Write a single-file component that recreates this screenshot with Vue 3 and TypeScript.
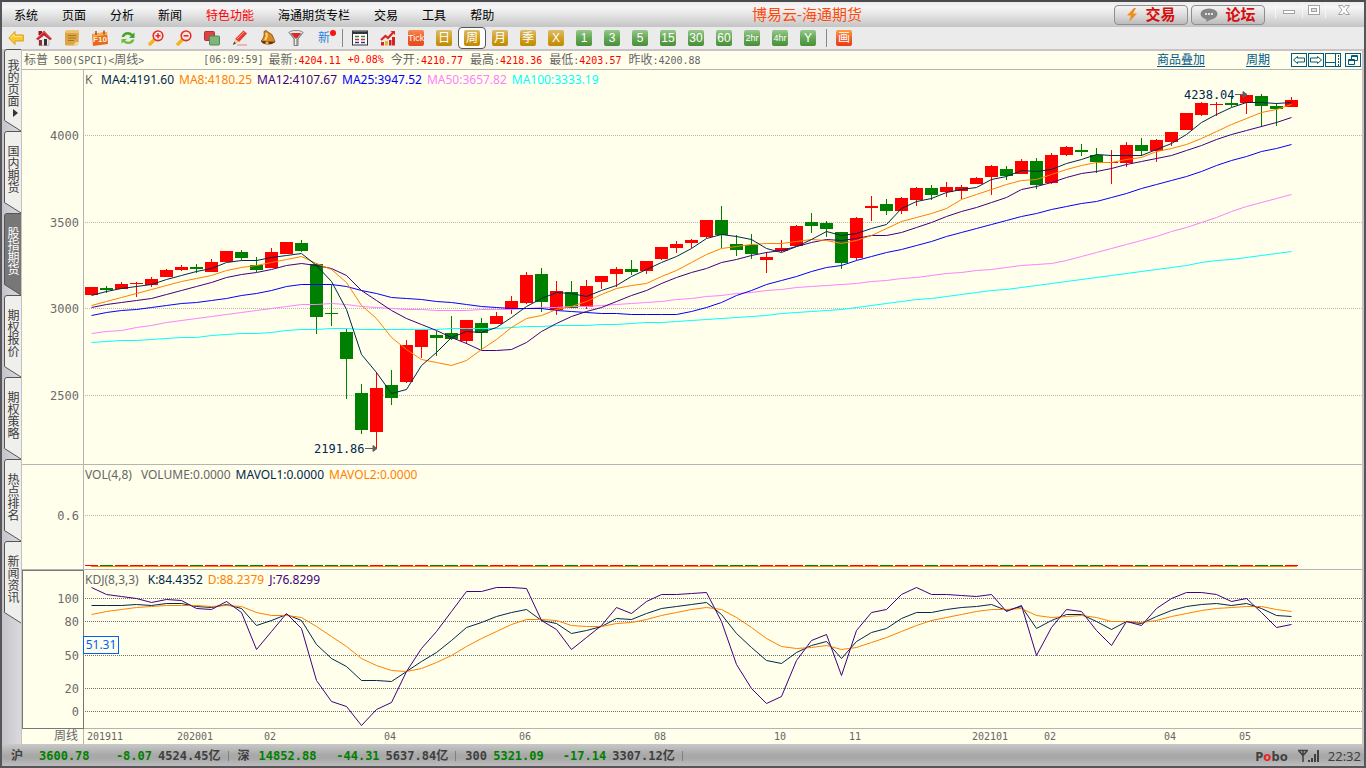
<script setup lang="ts">
type Candle = [dir: 'u' | 'd', top: number, bottom: number, high: number, low: number]
interface Tile { label: string; tone: string; small?: boolean; active?: boolean }

const STEP = 15
const FIRST_X = 7
const PRICE_TOP = 70
const KDJ_TOP = 570

const menu = ['系统', '页面', '分析', '新闻', '特色功能', '海通期货专栏', '交易', '工具', '帮助']
const tiles: Tile[] = [
  { label: 'Tick', tone: 'orange', small: true },
  { label: '日', tone: 'gold' },
  { label: '周', tone: 'gold', active: true },
  { label: '月', tone: 'gold' },
  { label: '季', tone: 'gold' },
  { label: 'X', tone: 'gold' },
  { label: '1', tone: 'green' },
  { label: '3', tone: 'green' },
  { label: '5', tone: 'green' },
  { label: '15', tone: 'green' },
  { label: '30', tone: 'green' },
  { label: '60', tone: 'green' },
  { label: '2hr', tone: 'green', small: true },
  { label: '4hr', tone: 'green', small: true },
  { label: 'Y', tone: 'green' },
]
const tabs = ['我的页面', '国内期货', '股指期货', '期权报价', '期权策略', '热点排名', '新闻资讯']
const activeTab = '股指期货'

const quotes = [
  { label: '今开', value: '4210.77', tone: 'up' },
  { label: '最高', value: '4218.36', tone: 'up' },
  { label: '最低', value: '4203.57', tone: 'up' },
  { label: '昨收', value: '4200.88', tone: 'flat' },
]

const maLegend = [
  { text: 'MA4:4191.60', tone: 'navy' },
  { text: 'MA8:4180.25', tone: 'amber' },
  { text: 'MA12:4107.67', tone: 'indigo' },
  { text: 'MA25:3947.52', tone: 'blue' },
  { text: 'MA50:3657.82', tone: 'pink' },
  { text: 'MA100:3333.19', tone: 'cyan' },
]
const volLegend = [
  { text: 'VOLUME:0.0000', tone: 'grey' },
  { text: 'MAVOL1:0.0000', tone: 'navy' },
  { text: 'MAVOL2:0.0000', tone: 'amber' },
]
const kdjLegend = [
  { text: 'K:84.4352', tone: 'navy' },
  { text: 'D:88.2379', tone: 'amber' },
  { text: 'J:76.8299', tone: 'indigo' },
]

const priceTicks = [
  { label: '4000', y: 65 },
  { label: '3500', y: 152 },
  { label: '3000', y: 238 },
  { label: '2500', y: 325 },
]
const kdjTicks = [
  { label: '100', y: 28 },
  { label: '80', y: 51 },
  { label: '50', y: 85 },
  { label: '20', y: 118 },
  { label: '0', y: 141 },
]
const dates = [
  { label: '201911', x: 3 },
  { label: '202001', x: 93 },
  { label: '02', x: 180 },
  { label: '04', x: 300 },
  { label: '06', x: 435 },
  { label: '08', x: 570 },
  { label: '10', x: 690 },
  { label: '11', x: 765 },
  { label: '202101', x: 888 },
  { label: '02', x: 960 },
  { label: '04', x: 1080 },
  { label: '05', x: 1155 },
]
const indices = [
  { name: '沪', last: '3600.78', change: '-8.07', amount: '4524.45' },
  { name: '深', last: '14852.88', change: '-44.31', amount: '5637.84' },
  { name: '300', last: '5321.09', change: '-17.14', amount: '3307.12' },
]

const candles: Candle[] = [
  ['u', 287, 295, 287, 295], ['d', 288, 290, 286, 293], ['u', 284, 289, 282, 289], ['u', 283, 284, 282, 297],
  ['u', 279, 285, 277, 287], ['u', 270, 277, 269, 277], ['u', 267, 270, 265, 271], ['d', 267, 269, 264, 273],
  ['u', 262, 272, 259, 272], ['u', 251, 262, 251, 262], ['d', 252, 258, 250, 260], ['d', 265, 270, 257, 272],
  ['u', 252, 268, 248, 268], ['u', 242, 254, 242, 254], ['d', 243, 251, 240, 252], ['d', 264, 317, 263, 334],
  ['d', 313, 314, 285, 326], ['d', 332, 359, 329, 399], ['d', 393, 430, 384, 434], ['u', 388, 432, 372, 449],
  ['d', 385, 398, 370, 405], ['u', 345, 382, 340, 383], ['u', 330, 347, 330, 358], ['d', 335, 338, 331, 356],
  ['d', 333, 339, 316, 340], ['u', 320, 341, 320, 344], ['d', 323, 333, 318, 350], ['u', 316, 324, 312, 324],
  ['u', 301, 309, 296, 314], ['u', 275, 303, 272, 304], ['d', 274, 302, 268, 312], ['u', 291, 310, 281, 315],
  ['d', 292, 308, 281, 308], ['u', 286, 307, 280, 309], ['u', 276, 282, 276, 289], ['u', 269, 274, 267, 287],
  ['d', 269, 272, 260, 275], ['u', 261, 271, 261, 274], ['u', 247, 259, 247, 260], ['u', 244, 248, 241, 253],
  ['u', 240, 243, 239, 248], ['u', 220, 237, 220, 238], ['d', 220, 235, 206, 248], ['d', 244, 250, 235, 256],
  ['d', 245, 254, 234, 259], ['u', 257, 260, 252, 273], ['u', 248, 251, 240, 252], ['u', 226, 246, 225, 247],
  ['d', 222, 226, 213, 233], ['d', 223, 229, 221, 237], ['d', 232, 263, 232, 269], ['u', 218, 258, 217, 260],
  ['u', 206, 208, 196, 221], ['d', 204, 211, 199, 215], ['u', 198, 211, 197, 214], ['u', 188, 200, 187, 206],
  ['d', 188, 195, 185, 200], ['u', 187, 192, 182, 197], ['u', 187, 191, 185, 199], ['u', 178, 184, 177, 184],
  ['u', 166, 177, 165, 195], ['d', 169, 176, 166, 180], ['u', 161, 174, 159, 174], ['d', 161, 185, 158, 189],
  ['u', 155, 183, 153, 184], ['u', 147, 155, 146, 156], ['d', 150, 152, 144, 156], ['d', 155, 162, 148, 173],
  ['u', 162, 163, 150, 184], ['u', 145, 163, 142, 167], ['d', 145, 151, 138, 156], ['u', 140, 151, 139, 162],
  ['u', 132, 142, 132, 146], ['u', 113, 130, 113, 130], ['u', 103, 115, 102, 116], ['u', 104, 105, 102, 116],
  ['d', 103, 105, 97, 107], ['u', 95, 103, 94, 114], ['d', 96, 106, 94, 127], ['d', 106, 109, 103, 126],
  ['u', 100, 107, 97, 107],
]

const averages = [
  {
    tone: 'cyan',
    values: [342, 341, 340, 340, 339, 338, 337, 337, 335, 334, 333, 333, 332, 330, 329, 329, 328, 328, 329, 329, 329, 329, 329, 329, 328, 328, 328, 328, 327, 326, 326, 325, 325, 325, 324, 324, 323, 322, 322, 321, 320, 319, 318, 317, 316, 315, 313, 312, 311, 310, 309, 307, 305, 303, 301, 299, 298, 296, 294, 292, 290, 289, 287, 285, 283, 281, 279, 277, 275, 273, 271, 269, 267, 265, 262, 260, 259, 257, 255, 253, 251],
  },
  {
    tone: 'pink',
    values: [333, 331, 330, 327, 325, 322, 320, 318, 316, 314, 312, 310, 308, 306, 304, 304, 303, 304, 306, 307, 308, 309, 309, 310, 310, 310, 309, 309, 309, 308, 307, 307, 306, 306, 305, 304, 303, 302, 301, 299, 298, 296, 295, 293, 292, 290, 289, 287, 286, 285, 284, 283, 281, 280, 278, 277, 275, 273, 272, 270, 269, 267, 265, 264, 263, 260, 256, 252, 248, 244, 240, 236, 231, 227, 222, 217, 211, 206, 202, 198, 194],
  },
  {
    tone: 'blue',
    values: [315, 312, 310, 309, 307, 305, 303, 302, 300, 298, 295, 293, 290, 286, 284, 284, 284, 286, 290, 293, 297, 298, 299, 301, 302, 304, 306, 307, 308, 308, 308, 310, 311, 312, 313, 313, 314, 314, 314, 314, 311, 307, 302, 295, 290, 284, 280, 276, 271, 267, 265, 260, 256, 252, 249, 245, 241, 236, 232, 228, 224, 220, 216, 213, 209, 206, 203, 201, 197, 193, 188, 184, 180, 176, 171, 165, 160, 156, 151, 148, 144],
  },
  {
    tone: 'indigo',
    values: [307, 304, 302, 300, 298, 294, 290, 286, 282, 277, 274, 272, 269, 265, 263, 265, 268, 275, 290, 300, 310, 318, 324, 330, 337, 343, 350, 350, 349, 342, 331, 323, 316, 311, 307, 301, 295, 290, 283, 277, 272, 268, 262, 259, 255, 252, 250, 246, 242, 239, 240, 238, 235, 235, 232, 227, 222, 216, 211, 207, 202, 197, 189, 186, 182, 177, 173, 171, 168, 164, 161, 158, 155, 150, 145, 139, 134, 130, 126, 122, 117],
  },
  {
    tone: 'amber',
    values: [305, 301, 297, 293, 289, 285, 281, 278, 275, 270, 267, 265, 262, 259, 256, 263, 269, 282, 305, 318, 337, 349, 359, 362, 365, 360, 349, 339, 327, 318, 315, 309, 306, 301, 294, 288, 285, 283, 276, 270, 262, 254, 248, 246, 244, 243, 243, 241, 239, 240, 243, 240, 235, 228, 221, 217, 213, 208, 199, 194, 189, 184, 180, 179, 174, 169, 165, 162, 162, 159, 157, 151, 148, 144, 138, 131, 124, 118, 112, 109, 104],
  },
  {
    tone: 'navy',
    values: [295, 291, 288, 286, 284, 279, 275, 271, 268, 262, 260, 260, 257, 255, 253, 265, 281, 309, 354, 372, 393, 389, 365, 352, 337, 331, 332, 327, 317, 306, 298, 292, 293, 296, 290, 285, 276, 269, 262, 256, 248, 238, 234, 236, 239, 248, 252, 246, 239, 231, 235, 233, 228, 224, 208, 201, 198, 192, 189, 187, 179, 176, 170, 171, 169, 163, 159, 154, 155, 155, 155, 149, 143, 134, 122, 114, 107, 102, 102, 103, 102],
  },
]

const oscillators = [
  {
    tone: 'navy',
    values: [605, 605, 605, 604, 605, 603, 603, 606, 607, 604, 608, 625, 620, 614, 620, 644, 658, 666, 680, 680, 681, 671, 661, 652, 640, 627, 622, 616, 612, 609, 620, 623, 633, 630, 626, 618, 619, 613, 608, 606, 604, 602, 614, 633, 647, 660, 663, 652, 645, 641, 658, 641, 632, 628, 618, 612, 612, 609, 607, 606, 604, 610, 606, 628, 620, 614, 614, 621, 629, 621, 623, 616, 610, 606, 604, 603, 605, 603, 608, 615, 616],
  },
  {
    tone: 'amber',
    values: [614, 611, 609, 607, 606, 605, 605, 605, 606, 605, 606, 612, 615, 615, 617, 626, 636, 646, 658, 665, 670, 671, 668, 662, 655, 646, 638, 631, 624, 619, 619, 620, 625, 626, 626, 623, 622, 619, 615, 612, 609, 607, 609, 617, 627, 638, 646, 648, 647, 645, 649, 647, 642, 637, 631, 625, 620, 617, 614, 611, 609, 609, 608, 615, 617, 616, 615, 617, 621, 621, 622, 620, 616, 613, 610, 608, 607, 606, 606, 609, 611],
  },
  {
    tone: 'indigo',
    values: [587, 594, 596, 598, 602, 599, 600, 608, 609, 601, 612, 649, 631, 613, 628, 680, 701, 706, 725, 709, 702, 671, 648, 631, 611, 591, 591, 587, 587, 588, 620, 629, 649, 637, 625, 607, 613, 601, 594, 594, 593, 592, 621, 664, 688, 703, 696, 660, 640, 634, 675, 630, 612, 609, 594, 587, 594, 594, 595, 596, 594, 611, 605, 655, 627, 609, 611, 630, 645, 621, 625, 608, 598, 592, 592, 594, 601, 598, 612, 627, 624],
  },
]

const centre = (i: number): number => FIRST_X + i * STEP
const linePoints = (values: number[], top: number): string =>
  values.map((v, i) => `${centre(i) + 0.5},${v - top + 0.5}`).join(' ')
</script>

<template>
  <div class="window">
    <header class="titlebar">
      <nav class="menu">
        <button v-for="m in menu" :key="m" type="button" :class="{ hot: m === '特色功能' }">{{ m }}</button>
      </nav>
      <h1 class="title">博易云-海通期货</h1>
      <div class="actions">
        <button type="button" class="pill">
          <svg width="12" height="14" viewBox="0 0 12 14" aria-hidden="true"><path d="M8 0 1 7.500h4L3 14l8-8.500H7L10 0z" fill="#f08c1c" /></svg>
          交易
        </button>
        <button type="button" class="pill">
          <svg width="18" height="14" viewBox="0 0 18 14" aria-hidden="true">
            <ellipse cx="9" cy="6" rx="8.500" ry="5.500" fill="#858585" />
            <path d="M7 10 6 14l6-3z" fill="#858585" />
            <path d="M5 5h2v2H5zM8 5h2v2H8zM11 5h2v2h-2z" fill="#e4e4e4" />
          </svg>
          论坛
        </button>
      </div>
      <div class="controls">
        <button type="button" aria-label="最小化"><svg width="14" height="12" viewBox="0 0 14 12"><rect x="1.500" y="6.500" width="11" height="3" fill="#fff" stroke="#a2a2a2" /></svg></button>
        <button type="button" aria-label="最大化"><svg width="14" height="12" viewBox="0 0 14 12"><rect x="1.500" y="1.500" width="11" height="9" fill="#fff" stroke="#a2a2a2" /><rect x="4.500" y="4.500" width="5" height="3" fill="#e0e0e0" stroke="#a2a2a2" /></svg></button>
        <button type="button" aria-label="关闭"><svg width="14" height="12" viewBox="0 0 14 12"><path d="M1.500 1.500h4L7 3.500l1.500-2h4L9 6l3.500 4.500h-4L7 8.500l-1.500 2h-4L5 6z" fill="#fff" stroke="#a2a2a2" /></svg></button>
      </div>
    </header>

    <div class="toolbar">
      <button type="button" aria-label="后退"><svg viewBox="0 0 16 16"><path d="M.8 8 7 1.500V5h8.300v6H7v3.500z" fill="#fdc82c" stroke="#d9a01c" /><path d="M2.500 8 6 4.500V6.500h8" fill="none" stroke="#ffe68a" /></svg></button>
      <button type="button" aria-label="首页"><svg viewBox="0 0 16 16"><path d="M3 7v8.500h10V7L8 3z" fill="#ece8e8" stroke="#999" stroke-width=".6" /><path d="M3 10h3v5.500H3z" fill="#8b3434" /><path d="M8 9h3v6.500H8z" fill="#34343c" /><path d="M2.500 1H6v4H2.500z" fill="#8f1c20" /><path d="M0 9 8 .5 16 9l-2 1L8 5.500 2 10z" fill="#c3232a" /><path d="m1.500 8 6.500-6.500L14.500 8" fill="none" stroke="#ef7778" /></svg></button>
      <button type="button" aria-label="公告"><svg viewBox="0 0 16 16"><path d="M1 2q0-1.500 2-1.500h12L14.500 12q-.5 3.500-3 3.500H2.500q-2 0-1.500-2z" fill="#dda544" /><path d="M1 2q0-1.500 2-1.500h12V3H2z" fill="#efc36c" /><path d="M4 5.500h8M4 8h8M4 10.500h6" stroke="#a87428" /><path d="M10 15.500q0-4 4.500-3.500-.5 3-4.500 3.500z" fill="#f5dda0" /></svg></button>
      <button type="button" aria-label="F10资料" class="f10"><svg viewBox="0 0 16 16"><path d="M0 4 15 2l1 12-15 2z" fill="#e8681c" /><path d="M.5 4 15 2v3L.5 7z" fill="#f9ab50" /><path d="M4 1v4M12 .5v4" stroke="#aa521b" stroke-width="1.500" /></svg><span>F10</span></button>
      <button type="button" aria-label="刷新"><svg viewBox="0 0 16 16"><path d="M1.500 7Q3 2 8 2q3 0 4.500 2l2-1.500V8H9l2-2Q6.500 2.500 4 7z" fill="#48a32a" /><path d="M14.500 9.500Q13 14 8 14q-3 0-4.500-2l-2 1.500V9H7L5 10.500Q9.500 13.500 12 9.500z" fill="#6abd36" /></svg></button>
      <button type="button" aria-label="放大"><svg viewBox="0 0 16 16"><path d="m6.500 9.500-4.500 4.500" stroke="#f2b51e" stroke-width="3.500" stroke-linecap="round" /><circle cx="10" cy="5.800" r="4.800" fill="#fbe6e4" stroke="#e23027" stroke-width="1.600" /><path d="M7.500 5.800h5M10 3.300v5" stroke="#e23027" stroke-width="1.600" /></svg></button>
      <button type="button" aria-label="缩小"><svg viewBox="0 0 16 16"><path d="m6.500 9.500-4.500 4.500" stroke="#f2b51e" stroke-width="3.500" stroke-linecap="round" /><circle cx="10" cy="5.800" r="4.800" fill="#fbe6e4" stroke="#e23027" stroke-width="1.600" /><path d="M7.500 5.800h5" stroke="#e23027" stroke-width="1.600" /></svg></button>
      <button type="button" aria-label="叠加"><svg viewBox="0 0 16 16"><rect x=".5" y="1.500" width="10" height="9" rx="1" fill="#d94545" stroke="#b32e2e" /><rect x="5.500" y="6" width="10" height="9" rx="1" fill="#7fb57c" stroke="#4b8a50" /></svg></button>
      <button type="button" aria-label="画线"><svg viewBox="0 0 16 16"><path d="M5 15h10" stroke="#f0817a" /><path d="m3 9 8.500-8.500 3.500 3L7 12z" fill="#e83c2c" /><path d="m5 9 7-7" stroke="#ff9c8c" /><path d="m3 9 4 3-5.500 2.500z" fill="#f0cc98" /><path d="m2.300 11.500-1.500 3.500 3.200-1.500z" fill="#444" /></svg></button>
      <button type="button" aria-label="预警"><svg viewBox="0 0 16 16"><path d="M4 1.500Q6-.5 8 2q5 2 5.500 6l1.500 4q-6 2-14-1 4-3.500 3-9.500z" fill="#d98a22" stroke="#8c4d15" stroke-width=".8" /><path d="M6 3q2 3-1 7" fill="none" stroke="#ffd77c" stroke-width="2" /><path d="M1 11q7 0 14 1-3 3-8 2.500T1 11z" fill="#67340f" /><circle cx="7" cy="13" r="1.700" fill="#e9b240" /></svg></button>
      <button type="button" aria-label="筛选"><svg viewBox="0 0 16 16"><path d="M1 2.500 6 9v6.500h4V9l5-6.500z" fill="#a9a9a9" stroke="#808080" /><path d="M7.500 9v6" stroke="#eee" /><ellipse cx="8" cy="2.700" rx="7" ry="2.200" fill="#e7e7e7" stroke="#888" /><path d="M3 3h10L9 8H7z" fill="#df2727" /></svg></button>
      <button type="button" aria-label="新功能" class="fresh">新<i></i></button>
      <span class="divider"></span>
      <button type="button" aria-label="报价表"><svg viewBox="0 0 16 16"><rect x=".5" y="1" width="15" height="14" fill="#fff" stroke="#333" /><path d="M1 1.500h14V4H1z" fill="#30343c" /><path d="M3 6.500h4M9 6.500h4" stroke="#398839" stroke-width="1.400" /><path d="M3 9.500h4M9 9.500h4" stroke="#cf3030" stroke-width="1.400" /><path d="M3 12.500h4M9 12.500h4" stroke="#333b7c" stroke-width="1.400" /></svg></button>
      <button type="button" aria-label="走势图"><svg viewBox="0 0 16 16"><path d="M1 12h3v3.500H1zM12 7h3v8.500h-3z" fill="#d92020" /><path d="M5 11h3v4.500H5z" fill="#efb22d" /><path d="M9 10h2.500v5.500H9z" fill="#bd2a22" /><path d="m1 10 4.500-4L8 8l6-6.500" fill="none" stroke="#e02222" stroke-width="2.200" /><path d="M10.500 1H15v4z" fill="#e02222" /></svg></button>
      <button v-for="t in tiles" :key="t.label" type="button" :class="{ current: t.active }">
        <span class="tile" :class="[t.tone, { small: t.small }]">{{ t.label }}</span>
      </button>
      <span class="divider"></span>
      <button type="button"><span class="tile red">画</span></button>
    </div>

    <div class="body">
      <aside class="tabs">
        <button v-for="(t, i) in tabs" :key="t" type="button" :class="{ on: t === activeTab }">
          <svg width="17" height="83" viewBox="0 0 17 83" aria-hidden="true"><path d="M17 .5H3Q.5.500.5 3v68.500L17 82" /></svg>
          <span>{{ t }}<svg v-if="i === 0" class="caret" width="12" height="12" viewBox="0 0 12 12"><path d="m4 2 5 4-5 4z" fill="#333" /></svg></span>
        </button>
      </aside>

      <main class="content">
        <div class="info">
          <span class="name">标普<span class="num">&nbsp;500(SPCI)&lt;</span>周线<span class="num">&gt;</span></span>
          <span class="num time">[06:09:59]</span>
          <span>最新<span class="num">:<b class="up">4204.11</b></span></span>
          <span class="num up">+0.08%</span>
          <span v-for="q in quotes" :key="q.label">{{ q.label }}<span class="num">:<b :class="q.tone">{{ q.value }}</b></span></span>
          <a href="#overlay" class="first-link">商品叠加</a>
          <a href="#period" class="second-link">周期</a>
          <span class="layout">
            <button type="button" aria-label="上一个"><svg width="16" height="14" viewBox="0 0 16 14"><path d="m2.500 7 4-3.500V5h7v4h-7v1.500z" /></svg></button>
            <button type="button" aria-label="下一个"><svg width="16" height="14" viewBox="0 0 16 14"><path d="m13.500 7-4-3.500V5h-7v4h7v1.500z" /></svg></button>
            <button type="button" aria-label="侧栏"><svg width="16" height="14" viewBox="0 0 16 14"><path d="M10.500 1v12M1 9.500h9" /><path d="M13.500 2v11" stroke-dasharray="2 1" /></svg></button>
            <button type="button" aria-label="还原" class="restore"><svg width="16" height="14" viewBox="0 0 16 14"><path d="M6.500 2.500h6v5h-6zM6 3.500h7M3.500 6.500h6v5h-6zM3 7.500h7" fill="#ffffec" /></svg></button>
          </span>
        </div>

        <div class="chart">
          <div class="axis">
            <svg width="61" height="100%"><text v-for="t in priceTicks" :key="t.label" x="57" :y="t.y + 5" class="tick">{{ t.label }}</text></svg>
          </div>
          <section class="pane">
            <p class="legend"><span class="grey kind">K</span><span v-for="l in maLegend" :key="l.text" :class="l.tone">{{ l.text }}</span></p>
            <svg width="100%" height="100%">
              <line v-for="t in priceTicks" :key="t.label" x1="1" x2="100%" :y1="t.y + 0.5" :y2="t.y + 0.5" class="grid soft" />
              <g v-for="(c, i) in candles" :key="i" :class="c[0]" shape-rendering="crispEdges">
                <rect :x="centre(i)" :y="c[3] - PRICE_TOP" width="1" :height="c[4] - c[3]" />
                <rect :x="centre(i) - 6" :y="c[1] - PRICE_TOP" width="13" :height="c[2] - c[1]" />
              </g>
              <polyline v-for="a in averages" :key="a.tone" :points="linePoints(a.values, PRICE_TOP)" class="line" :class="a.tone" />
              <text x="230" y="383" class="mark">2191.86</text>
              <path d="M281 378.500h8v-3l4 3-4 3v-3" class="pointer" />
              <text x="1100" y="29" class="mark">4238.04</text>
              <path d="M1151 24.500h8v-3l4 3-4 3v-3" class="pointer" />
            </svg>
          </section>

          <div class="axis">
            <svg width="61" height="100%"><text x="57" y="55" class="tick">0.6</text></svg>
          </div>
          <section class="pane">
            <p class="legend"><span class="grey study">VOL(4,8)</span><span v-for="l in volLegend" :key="l.text" :class="l.tone">{{ l.text }}</span></p>
            <svg width="100%" height="100%">
              <line x1="1" x2="100%" y1="50.500" y2="50.500" class="grid soft" />
              <g v-for="(c, i) in candles" :key="i" :class="c[0]"><rect :x="centre(i) - 6" y="100" width="13" height="1" /></g>
              <rect x="7" y="101" width="1206" height="1" fill="#ff8000" />
            </svg>
          </section>

          <div class="axis boxed">
            <svg width="59" height="100%"><text v-for="t in kdjTicks" :key="t.label" x="56" :y="t.y + 4" class="tick">{{ t.label }}</text></svg>
          </div>
          <section class="pane">
            <p class="legend"><span class="grey study">KDJ(8,3,3)</span><span v-for="l in kdjLegend" :key="l.text" :class="l.tone">{{ l.text }}</span></p>
            <svg width="100%" height="100%">
              <line v-for="t in kdjTicks" :key="t.label" x1="1" x2="100%" :y1="t.y + 0.5" :y2="t.y + 0.5" class="grid" />
              <polyline v-for="o in oscillators" :key="o.tone" :points="linePoints(o.values, KDJ_TOP)" class="line" :class="o.tone" />
            </svg>
            <output class="cursor-value">51.31</output>
          </section>

          <div class="axis period">周线</div>
          <div class="pane dates">
            <svg width="100%" height="15"><text v-for="d in dates" :key="d.x" :x="d.x" y="11" class="date">{{ d.label }}</text></svg>
          </div>
        </div>
      </main>
    </div>

    <footer class="status">
      <span v-for="ix in indices" :key="ix.name" class="index">
        <span class="ix-name">{{ ix.name }}</span>
        <span class="down last">{{ ix.last }}</span>
        <span class="down change">{{ ix.change }}</span>
        <span class="amount">{{ ix.amount }}<span class="unit">亿</span></span>
      </span>
      <span class="brand">P<em>o</em>bo</span>
      <svg width="22" height="14" viewBox="0 0 22 14" aria-hidden="true"><path d="M0 1.500h10M1 2l4 4.500L9 2M5 2v11" fill="none" stroke="#404040" stroke-width="1.500" /><path d="M10 11h2v2h-2zM13 9h2v4h-2zM16 5h2v8h-2zM19 1h2v12h-2z" fill="#404040" /></svg>
      <time>22:32</time>
    </footer>
  </div>
</template>

<style>
body { margin: 0; }
</style>

<style scoped>
* { box-sizing: border-box; }
button { border: 0; background: none; padding: 0; margin: 0; color: inherit; font: inherit; display: flex; align-items: center; justify-content: center; }
.window {
  height: 100vh; min-height: 600px; display: flex; flex-direction: column; overflow: hidden;
  border: 2px solid #56565a; border-top-color: #4c4c50; background: #c9c9cd;
  font: 12px/16px "Liberation Sans", "Noto Sans CJK SC", sans-serif; color: #000;
}
.titlebar { height: 25px; flex: none; display: flex; align-items: center; background: linear-gradient(#ececec, #f6f6f6 20%, #e2e2e2 55%, #c4c4c4); }
.menu { display: flex; gap: 24px; padding: 2px 0 0 12px; }
.menu .hot { color: #f00; }
.title { flex: 1; margin: 0; padding-left: 6px; text-align: center; font-size: 15px; font-weight: 400; color: #ff4a0c; }
.actions { display: flex; gap: 3px; }
.pill { width: 74px; height: 20px; gap: 7px; border: 1px solid #8e8e8e; border-radius: 4px; background: linear-gradient(#f4f4f4, #dcdcdc 50%, #bcbcbc); color: #d80c0c; font-size: 15px; font-weight: 700; }
.controls { display: flex; align-self: flex-start; padding-left: 10px; padding-right: 3px; }
.controls button { width: 27px; height: 16px; border-left: 1px solid #f6f6f6; }
.controls button:nth-child(2) { width: 23px; }
.controls button:nth-child(3) { width: 36px; }
.toolbar { height: 24px; flex: none; display: flex; align-items: center; background: #ebebeb; border-bottom: 2px solid #cbc2c6; }
.toolbar button { width: 28px; height: 22px; flex: none; position: relative; }
.toolbar svg { width: 16px; height: 16px; }
.toolbar .current { border: 1px solid #555; border-radius: 4px; background: #fff; }
.divider { width: 8px; height: 18px; flex: none; display: flex; justify-content: center; }
.divider::before { content: ""; width: 1px; background: #888; }
.f10 span { position: absolute; left: 6px; top: 8px; width: 16px; text-align: center; font: 700 8px/10px "Liberation Sans", sans-serif; color: #fff3cf; }
.fresh { color: #2d83dd; }
.fresh i { position: absolute; top: 3px; right: 2px; width: 6px; height: 6px; border-radius: 50%; background: #ff1010; }
.tile { width: 16px; height: 16px; border-radius: 2px; color: #fff; font-size: 12px; line-height: 16px; text-align: center; white-space: nowrap; overflow: hidden; }
.tile.small { font-size: 9px; }
.gold { background: linear-gradient(#dcbb70, #d2a022 50%, #bf8a00); }
.green { background: linear-gradient(#96c88a, #66a856 50%, #488f38); }
.orange { background: linear-gradient(#f88a54, #ee5a24 50%, #e84a1c); }
.red { background: linear-gradient(#ff9f45, #f2602a 50%, #e83c14); }
.body { flex: 1; min-height: 0; display: flex; }
.tabs { width: 20px; flex: none; padding-left: 2px; margin-top: -2px; border-right: 1px solid #c8bfc3; background: linear-gradient(90deg, #c4c4ca, #dadade); position: relative; }
.tabs button { display: grid; width: 17px; height: 82px; color: #3c3c3c; }
.tabs button > * { grid-area: 1 / 1; }
.tabs button > svg { fill: #efefec; stroke: #555; align-self: start; }
.tabs button > span { writing-mode: vertical-rl; font-size: 12px; line-height: 16px; align-self: start; justify-self: start; padding-top: 14px; text-align: left; }
.tabs button:first-child > span { padding-top: 10px; }
.tabs .on { color: #fff; }
.tabs .on > svg { fill: #777; }
.caret { display: inline-block; vertical-align: middle; }
.content { flex: 1; min-width: 0; display: flex; flex-direction: column; background: #ffffec; border-right: 2px solid #cbc2c6; color: #666; }
.info { height: 19px; flex: none; display: flex; align-items: center; gap: 7px; padding: 0 1px 0 2px; border-bottom: 1px solid #b4b4b4; white-space: nowrap; }
.num { font: 10px/16px "DejaVu Sans Mono", monospace; }
.num b { font-weight: 400; }
.up { color: #f00; }
.flat { color: #666; }
.time { margin-left: 52px; margin-right: -2px; }
.info a { color: #005a8c; text-underline-offset: 2px; }
.first-link { margin-left: auto; }
.second-link { margin-left: 34px; }
.layout { display: flex; gap: 1px; margin-left: 14px; }
.layout button { border: 1px solid #005a8c; width: 16px; height: 14px; }
.layout svg { fill: none; stroke: #005a8c; flex: none; }
.layout .restore { margin-left: 3px; }
.chart { flex: 1; min-height: 0; display: grid; grid-template-columns: 62px minmax(0, 1fr); grid-template-rows: minmax(0, 1fr) 105px 159px 15px; }
.axis { border-right: 1px solid #b4b4b4; border-bottom: 1px solid #b4b4b4; overflow: hidden; }
.pane { border-bottom: 1px solid #b4b4b4; position: relative; overflow: visible; min-width: 0; }
.axis > svg, .pane > svg { display: block; overflow: hidden; }
.boxed { border: 1px solid #777; }
.period { border-bottom: 0; text-align: right; padding-right: 5px; line-height: 15px; }
.dates { border-bottom: 0; }
.tick { font: 12px "DejaVu Sans Mono", monospace; text-anchor: end; fill: #6b6b6b; }
.date { font: 10px "DejaVu Sans Mono", monospace; fill: #666; }
.mark { font: 12px "DejaVu Sans Mono", monospace; fill: #002850; }
.pointer { fill: #606060; stroke: #606060; }
.legend { position: absolute; left: 1px; top: 2px; margin: 0; display: flex; gap: 5px; font: 12px/16px "Noto Sans", sans-serif; white-space: nowrap; }
.kind { width: 11px; }
.study { margin-right: 4px; }
.grey { color: #666; }
.navy { color: #002850; stroke: #002850; }
.amber { color: #ff8000; stroke: #ff8000; }
.indigo { color: #400080; stroke: #400080; }
.blue { color: #00f; stroke: #00f; }
.pink { color: #ff80ff; stroke: #ff80ff; }
.cyan { color: #00ffff; stroke: #00ffff; }
.line { fill: none; stroke-width: 1; }
.u { fill: #f00; }
.d { fill: #008000; }
.grid { stroke: #707070; stroke-dasharray: 1 1; shape-rendering: crispEdges; }
.soft { stroke: #b8b8b0; }
.cursor-value { position: absolute; left: -1px; top: 66px; width: 36px; height: 18px; border: 1px solid #0060ff; background: #ffffec; color: #0060ff; font: 12px/16px "Noto Sans", sans-serif; text-align: center; }
.status { height: 22px; flex: none; display: flex; align-items: center; padding: 2px 3px 0 9px; background: linear-gradient(#c8c8c8, #a8a8a8 50%, #a8a8a8 65%, #bdbdbd); color: #404040; font: 700 12px/16px "DejaVu Sans Mono", "Noto Sans CJK SC", monospace; white-space: nowrap; }
.index { display: flex; align-items: center; padding-right: 8px; margin-right: 9px; position: relative; }
.index::after { content: ""; position: absolute; right: 0; top: 3px; width: 1px; height: 10px; background: #808080; }
.ix-name { width: 28px; }
.index:nth-child(2) .ix-name { width: 21px; }
.last { width: 52px; }
.index:nth-child(2) .last { width: 60px; }
.change { width: 67px; text-align: right; padding-right: 6px; }
.down { color: #008000; }
.brand { margin-left: auto; margin-right: 10px; font: 700 13px/16px "Noto Sans", sans-serif; }
.brand em { font-style: normal; color: #f02020; }
.status time { margin-left: 8px; font: 13px/16px "Noto Sans", sans-serif; }
</style>
